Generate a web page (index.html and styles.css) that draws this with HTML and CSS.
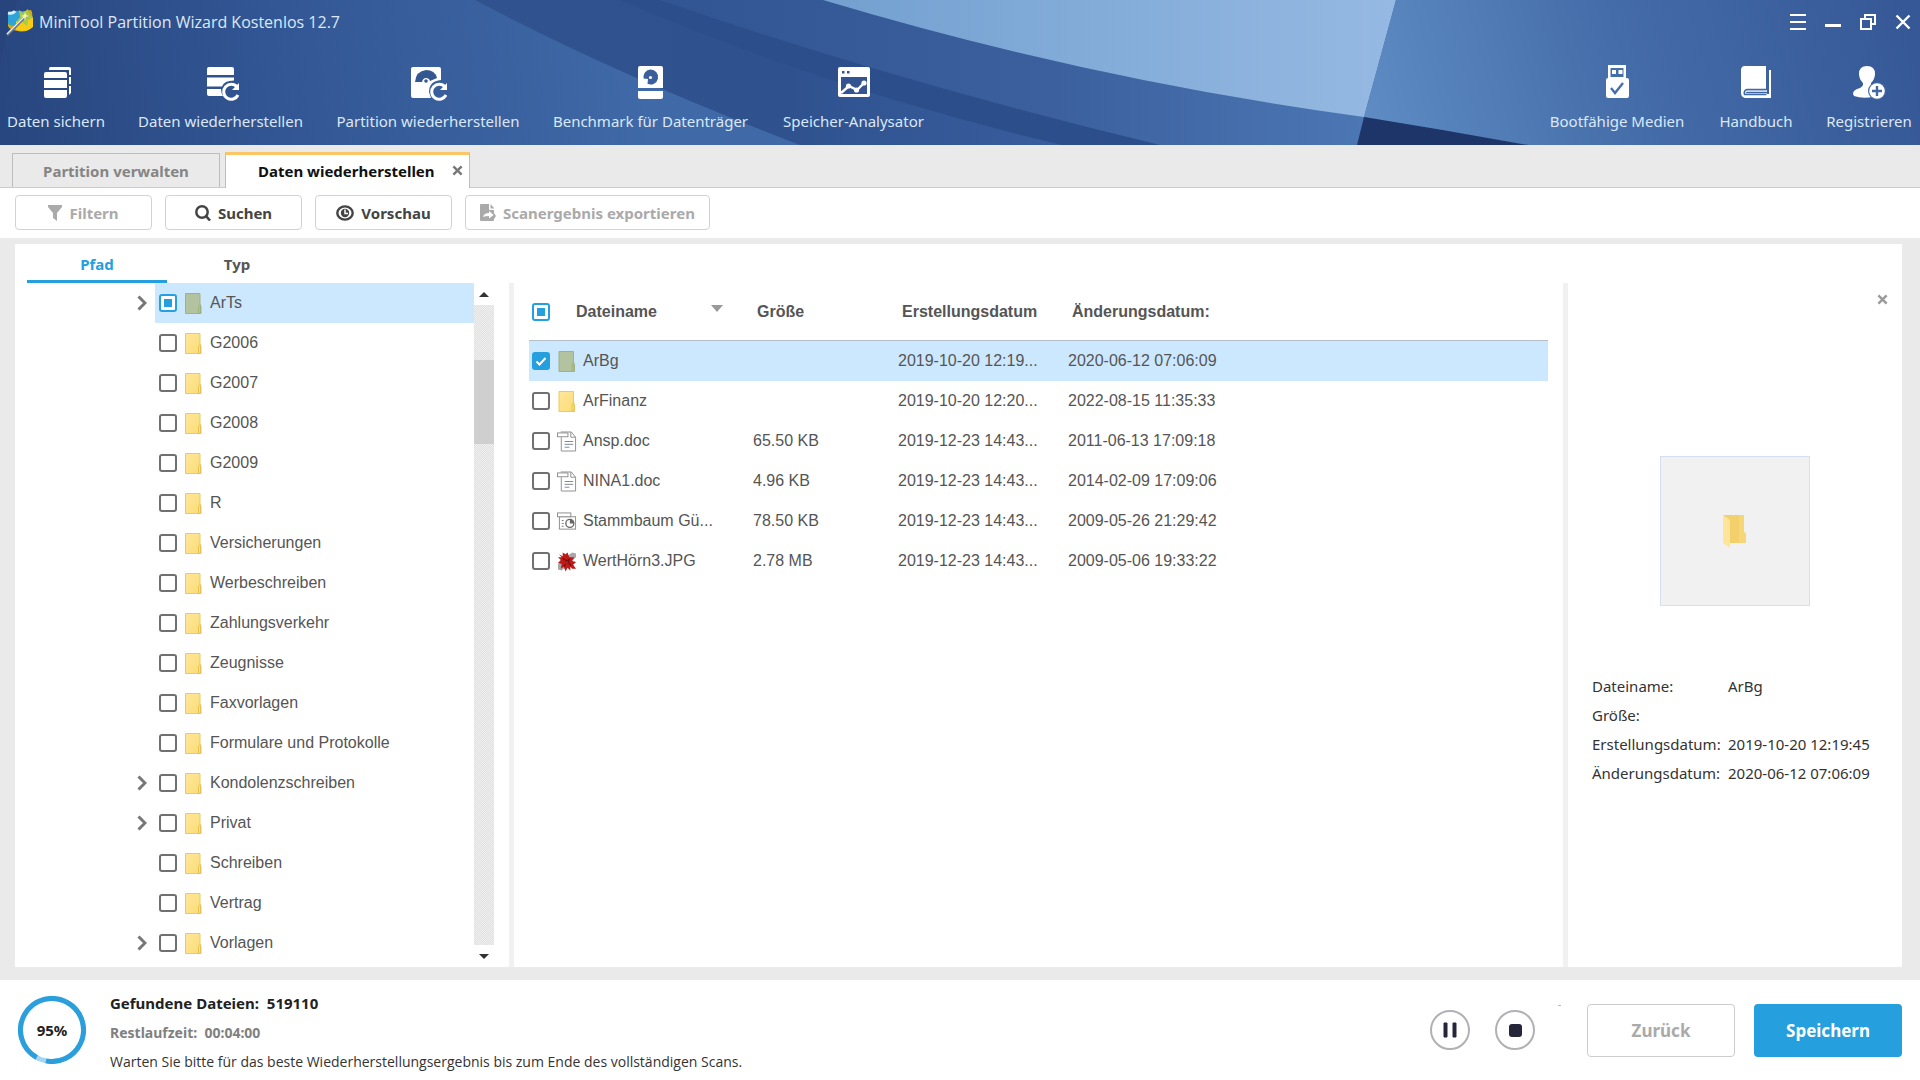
FILE: index.html
```html
<!DOCTYPE html>
<html lang="de">
<head>
<meta charset="utf-8">
<title>MiniTool Partition Wizard Kostenlos 12.7</title>
<link rel="stylesheet" href="styles.css">
</head>
<body>
<svg class="defs" width="0" height="0" aria-hidden="true">
  <defs>
    <linearGradient id="folderFill" x1="0" y1="0" x2="1" y2="1"><stop offset="0" stop-color="#ffe79c"/><stop offset="1" stop-color="#fbdc74"/></linearGradient>
  </defs>
  <symbol id="folder" viewBox="0 0 17 21"><path d="M.5.5h14.500v12l1 1v7H.5z" fill="url(#folderFill)" stroke="#ecca62"/><path d="M13.500 20v-7l2-1.500v9z" fill="#fce28a" stroke="#e3bb4c" stroke-width=".8"/></symbol>
  <symbol id="folder-sel" viewBox="0 0 17 21"><path d="M.5.5h14.500v12l1 1v7H.5z" fill="#b3c3a0" stroke="#9db287"/><path d="M13.500 20v-7l2-1.500v9z" fill="#b0c28f" stroke="#9aae7a" stroke-width=".8"/></symbol>
  <symbol id="doc" viewBox="0 0 21 21"><path d="M4.500 6v14.500h15V6L15 .5H4" fill="#fff" stroke="#8d8d8d"/><path d="M14.500.5V6h5" fill="none" stroke="#8d8d8d"/><rect x=".5" y="1.500" width="11" height="4" fill="#fff" stroke="#8d8d8d"/><path d="M8 10.500h9M8 13.500h9M8 16.500h5" stroke="#7d8591"/></symbol>
  <symbol id="ppt" viewBox="0 0 21 21"><rect x="2.500" y="5.500" width="17" height="13" fill="#fff" stroke="#8d8d8d"/><rect x=".5" y="1.500" width="14" height="4" fill="#fff" stroke="#8d8d8d"/><path d="M5 9.500h2M5 12.500h2M5 15.500h2" stroke="#777"/><circle cx="13.500" cy="12.500" r="4.200" fill="#fff" stroke="#666" stroke-width="1.400"/><path d="M13.500 12.500V8.300a4.200 4.200 0 0 1 4.200 4.200z" fill="#666"/></symbol>
  <symbol id="jpg" viewBox="0 0 21 21"><path d="M12 4l4-3 4 1v4l-6 5zM1 13l6-3 2 6-4 4-4-1z" fill="#a8a8a8"/><path d="M2 3l4 2V1l3 2 2-2 2 5 5 0-2 4 4 1-3 3 3 4-4 0-2-2 0 4-3-3-2 4-2-5-3 2 1-5-4-1 3-3-3-3 4 0z" fill="#bd1a1a"/><path d="M6 7l4 3 3-2-1 4 3 3M9 13l-2 3" fill="none" stroke="#7c0e0e" stroke-width="1.300"/></symbol>
  <symbol id="cross" viewBox="0 0 12 12"><path d="M1.500 1.500l9 9M10.500 1.500l-9 9" stroke="currentColor" stroke-width="2.600"/></symbol>
</svg>

<header class="app-header">
  <svg class="header-art" viewBox="0 0 1920 145" preserveAspectRatio="none" aria-hidden="true">
    <defs>
      <linearGradient id="g1" gradientUnits="userSpaceOnUse" x1="0" y1="130" x2="640" y2="40"><stop offset="0" stop-color="#28467f"/><stop offset=".4" stop-color="#315592"/><stop offset="1" stop-color="#4069a7"/></linearGradient>
      <linearGradient id="g2" x1="0" x2="1"><stop offset="0" stop-color="#305390"/><stop offset=".5" stop-color="#2f528f"/><stop offset="1" stop-color="#3a5e9f"/></linearGradient>
      <linearGradient id="g3" x1="0" x2="1"><stop offset="0" stop-color="#315592"/><stop offset=".45" stop-color="#3c609e"/><stop offset="1" stop-color="#5484c0"/></linearGradient>
      <linearGradient id="g4" x1="0" x2="1"><stop offset="0" stop-color="#73a0d0"/><stop offset="1" stop-color="#95b9e2"/></linearGradient>
      <linearGradient id="g5" gradientUnits="userSpaceOnUse" x1="1360" y1="145" x2="1900" y2="0"><stop offset="0" stop-color="#5f8dc4"/><stop offset=".5" stop-color="#446ca8"/><stop offset="1" stop-color="#365897"/></linearGradient>
    </defs>
    <rect width="1920" height="145" fill="url(#g1)"/>
    <path d="M0 0h18Q5 30 0 65z" fill="#27447d"/>
    <path d="M475 0Q610 72 800 145H1100L640 0z" fill="url(#g2)"/>
    <path d="M660 0Q890 90 1160 145H1540L830 0z" fill="url(#g3)"/>
    <path d="M620 0Q830 90 1062 145H1160Q890 80 660 0z" fill="#2c4e8b"/>
    <path d="M823 0Q1090 80 1364 117L1396 0z" fill="url(#g4)"/>
    <path d="M1396 0H1920V145H1528L1364 117z" fill="url(#g5)"/>
    <path d="M1364 117Q1445 130 1528 145H1357z" fill="#1e3569"/>
  </svg>
  <div class="titlebar">
    <svg class="logo" viewBox="0 0 28 28" aria-hidden="true">
      <path d="M2 6q6-5 11-2l12-2q2 3 1 8v9q-5 6-14 4-9-1-10-5z" fill="#d9a90d"/>
      <path d="M2 5q9-4 15-1v9l-8 5q-6 0-7-3z" fill="#2da3d8"/>
      <path d="M2 5q5 1 7-2" stroke="#d3f2fc" stroke-width="3" fill="none"/>
      <path d="M10 13q8 3 17-4v10q-7 6-17 3z" fill="#f5cc16"/>
      <path d="M13 2l4 3 5-4 1 5 4 3-5 3-1 6-5-4-5-1 3-4z" fill="#a7c94c"/>
      <path d="M1 27L20 8" stroke="#687689" stroke-width="3"/><path d="M1 26L19 8" stroke="#e9f1f5" stroke-width="1.300"/>
      <path d="M19 4l1 3 3 1-3 1-1 4-1-4-3-1 3-1z" fill="#f6f7b0"/>
    </svg>
    <h1 class="app-title">MiniTool Partition Wizard Kostenlos 12.7</h1>
    <div class="window-controls">
      <button class="win-btn" aria-label="Menü"><svg viewBox="0 0 16 16"><path d="M0 1h16M0 8h16M0 15h16" stroke="#fff" stroke-width="2"/></svg></button>
      <button class="win-btn" aria-label="Minimieren"><svg viewBox="0 0 16 16"><path d="M0 11.500h16" stroke="#fff" stroke-width="3"/></svg></button>
      <button class="win-btn" aria-label="Wiederherstellen"><svg viewBox="0 0 16 16"><path d="M5 5V1h10v9h-4M1 5h10v10H1z" fill="none" stroke="#fff" stroke-width="2"/></svg></button>
      <button class="win-btn" aria-label="Schließen"><svg viewBox="0 0 16 16"><path d="M1.500 1.500l13 13M14.500 1.500l-13 13" stroke="#fff" stroke-width="2.400"/></svg></button>
    </div>
  </div>
  <nav class="ribbon" aria-label="Werkzeuge">
    <div class="ribbon-left">
      <button class="ribbon-btn"><svg viewBox="-3 0 38 36"><g fill="#fff"><path d="M10 2h19q2 0 2 2v6h-2V5H9q0-3 1-3zM29 12h2v7h-2zM29 21h2v7l-2 2z"/><path d="M6 7h19q2 0 2 2v4H4V9q0-2 2-2zM4 15h23v8H4zM4 25h23v6q0 2-2 2H6q-2 0-2-2z"/></g></svg>Daten sichern</button>
      <button class="ribbon-btn"><svg viewBox="0 0 38 36"><path d="M7 2h23q2 0 2 2v6H5V4q0-2 2-2zM5 12.500h27v3q-10 0-12 6H5zM5 24h14q0 4 2 7H7q-2 0-2-2z" fill="#fff"/><path d="M35 22a7.500 7.500 0 1 0 1 8" fill="none" stroke="#fff" stroke-width="3"/><path d="M37 18v7h-7z" fill="#fff"/></svg>Daten wiederherstellen</button>
      <button class="ribbon-btn"><svg viewBox="-1 0 38 36"><path d="M3 2h26q2 0 2 2v11q-12 1-12 12l2 6H3q-2 0-2-2V4q0-2 2-2z" fill="#fff"/><path d="M5 17q1-11 11-12 9 0 11 8l-7 3q-1-3-4-3-3 0-4 4z" fill="#34578f"/><circle cx="16" cy="16" r="1.800" fill="#34578f"/><path d="M35 22a7.500 7.500 0 1 0 1 8" fill="none" stroke="#fff" stroke-width="3"/><path d="M37 18v7h-7z" fill="#fff"/></svg>Partition wiederherstellen</button>
      <button class="ribbon-btn"><svg viewBox="0 0 38 36"><path d="M8 1h21q2 0 2 2v20H6V3q0-2 2-2zM6 26h25v6q0 2-2 2H8q-2 0-2-2z" fill="#fff"/><path d="M18.500 4.500a7.500 7.500 0 1 1-3 14.300l.5-4.800-4.500-.5A7.500 7.500 0 0 1 18.500 4.500z" fill="#3a5f9c"/><circle cx="18.500" cy="12.500" r="1.600" fill="#fff"/></svg>Benchmark für Datenträger</button>
      <button class="ribbon-btn"><svg viewBox="-1 0 38 36"><path d="M4 2h28q2 0 2 2v26q0 2-2 2H4q-2 0-2-2V4q0-2 2-2z" fill="#fff"/><path d="M5 12h26v17H5zM6 6h2.500v2.500H6zM11 6h2.500v2.500H11z" fill="#335490"/><path d="M5 28l8-7 8 4 8-8" fill="none" stroke="#fff" stroke-width="2.400"/><circle cx="12.500" cy="21" r="2.600" fill="#fff"/><circle cx="20.500" cy="25" r="2.600" fill="#fff"/><circle cx="28" cy="18" r="2.600" fill="#fff"/></svg>Speicher-Analysator</button>
    </div>
    <div class="ribbon-right">
      <button class="ribbon-btn"><svg viewBox="0 0 38 36"><path d="M10 0h18v13h1q2 0 2 2v16q0 2-2 2H10q-2 0-2-2V15q0-2 2-2z" fill="#fff"/><path d="M12.500 3h13v9h-13z" fill="#4470a9"/><path d="M14 5h4v4h-4zM20.500 5h4v4h-4z" fill="#fff"/><path d="M13 23l4 5 8-10" fill="none" stroke="#4470a9" stroke-width="2.400"/></svg>Bootfähige Medien</button>
      <button class="ribbon-btn"><svg viewBox="0 0 38 36"><path d="M7 1h22v24H10q-4 1-3 4h25V5h2v28H8q-4-1-4-5V4q1-3 3-3z" fill="#fff"/><path d="M30 26H10q-3 1-2 3h22" fill="none" stroke="#fff" stroke-width="1.500"/><path d="M29 24.500H10q-3.500 1-2.500 5h22" fill="none" stroke="#4169a6" stroke-width="1.500"/></svg>Handbuch</button>
      <button class="ribbon-btn"><svg viewBox="0 0 38 36"><path d="M17 1q8 0 8 8 0 5-4 9 0 3 2 3l-2 7 2 4q-11 2-19-1-3-4 3-7 7-2 6-6-4-4-4-9 0-8 8-8z" fill="#fff"/><circle cx="27" cy="26" r="9" fill="#41699f"/><circle cx="27" cy="26" r="7.800" fill="#fff"/><path d="M27 21v10M22 26h10" stroke="#41699f" stroke-width="2.400"/></svg>Registrieren</button>
    </div>
  </nav>
</header>

<nav class="tabs" aria-label="Registerkarten">
  <button class="tab">Partition verwalten</button>
  <div class="tab tab-active">
    <button class="tab-label">Daten wiederherstellen</button>
    <button class="tab-close" aria-label="Registerkarte schließen"><svg width="11" height="11"><use href="#cross"/></svg></button>
  </div>
</nav>

<div class="toolbar">
  <button class="tool-btn" disabled><svg width="14" height="16" viewBox="0 0 14 16"><path d="M0 0h14v2L9 8v8l-4-3V8L0 2z" fill="currentColor"/></svg>Filtern</button>
  <button class="tool-btn"><svg width="16" height="16" viewBox="0 0 16 16"><circle cx="7" cy="7" r="5.700" fill="none" stroke="currentColor" stroke-width="2.500"/><path d="M10.500 10.500l4.500 5" stroke="currentColor" stroke-width="2.600"/></svg>Suchen</button>
  <button class="tool-btn"><svg width="18" height="16" viewBox="0 0 18 16"><ellipse cx="9" cy="8" rx="7.700" ry="6.600" fill="none" stroke="currentColor" stroke-width="2.400"/><circle cx="9" cy="8" r="4.200" fill="currentColor"/><path d="M9 4.500V8.500h3" fill="none" stroke="#fff" stroke-width="1.500"/></svg>Vorschau</button>
  <button class="tool-btn tool-btn-wide" disabled><svg width="16" height="18" viewBox="0 0 16 18"><path d="M1 0h8v5q0 1 1 1h4v3l2 3-2 3v1q0 1-1 1H1q-1 0-1-1V1q0-1 1-1z" fill="currentColor"/><path d="M10.500 0l4 4.500h-4z" fill="currentColor"/><path d="M3 13q1-4 6-4V7l4.500 4L9 14.500V12q-4 0-6 1z" fill="#fff"/></svg>Scanergebnis exportieren</button>
</div>

<main class="workspace">
  <section class="tree-pane">
    <div class="tree-tabs">
      <button class="tree-tab tree-tab-active">Pfad</button>
      <button class="tree-tab">Typ</button>
    </div>
    <div class="tree-body">
      <ul class="tree">
        <li class="tree-row"><button class="expander" aria-label="ArTs aufklappen"><svg viewBox="0 0 10 16"><path d="M1.500 1.500L8 8l-6.500 6.500"/></svg></button><label class="node node-selected"><input type="checkbox" class="check check-partial"><svg class="folder"><use href="#folder-sel"/></svg>ArTs</label></li>
        <li class="tree-row"><label class="node"><input type="checkbox" class="check"><svg class="folder"><use href="#folder"/></svg>G2006</label></li>
        <li class="tree-row"><label class="node"><input type="checkbox" class="check"><svg class="folder"><use href="#folder"/></svg>G2007</label></li>
        <li class="tree-row"><label class="node"><input type="checkbox" class="check"><svg class="folder"><use href="#folder"/></svg>G2008</label></li>
        <li class="tree-row"><label class="node"><input type="checkbox" class="check"><svg class="folder"><use href="#folder"/></svg>G2009</label></li>
        <li class="tree-row"><label class="node"><input type="checkbox" class="check"><svg class="folder"><use href="#folder"/></svg>R</label></li>
        <li class="tree-row"><label class="node"><input type="checkbox" class="check"><svg class="folder"><use href="#folder"/></svg>Versicherungen</label></li>
        <li class="tree-row"><label class="node"><input type="checkbox" class="check"><svg class="folder"><use href="#folder"/></svg>Werbeschreiben</label></li>
        <li class="tree-row"><label class="node"><input type="checkbox" class="check"><svg class="folder"><use href="#folder"/></svg>Zahlungsverkehr</label></li>
        <li class="tree-row"><label class="node"><input type="checkbox" class="check"><svg class="folder"><use href="#folder"/></svg>Zeugnisse</label></li>
        <li class="tree-row"><label class="node"><input type="checkbox" class="check"><svg class="folder"><use href="#folder"/></svg>Faxvorlagen</label></li>
        <li class="tree-row"><label class="node"><input type="checkbox" class="check"><svg class="folder"><use href="#folder"/></svg>Formulare und Protokolle</label></li>
        <li class="tree-row"><button class="expander" aria-label="Kondolenzschreiben aufklappen"><svg viewBox="0 0 10 16"><path d="M1.500 1.500L8 8l-6.500 6.500"/></svg></button><label class="node"><input type="checkbox" class="check"><svg class="folder"><use href="#folder"/></svg>Kondolenzschreiben</label></li>
        <li class="tree-row"><button class="expander" aria-label="Privat aufklappen"><svg viewBox="0 0 10 16"><path d="M1.500 1.500L8 8l-6.500 6.500"/></svg></button><label class="node"><input type="checkbox" class="check"><svg class="folder"><use href="#folder"/></svg>Privat</label></li>
        <li class="tree-row"><label class="node"><input type="checkbox" class="check"><svg class="folder"><use href="#folder"/></svg>Schreiben</label></li>
        <li class="tree-row"><label class="node"><input type="checkbox" class="check"><svg class="folder"><use href="#folder"/></svg>Vertrag</label></li>
        <li class="tree-row"><button class="expander" aria-label="Vorlagen aufklappen"><svg viewBox="0 0 10 16"><path d="M1.500 1.500L8 8l-6.500 6.500"/></svg></button><label class="node"><input type="checkbox" class="check"><svg class="folder"><use href="#folder"/></svg>Vorlagen</label></li>
      </ul>
      <div class="scrollbar">
        <button class="scroll-btn" aria-label="Nach oben"><svg width="10" height="5"><path d="M0 5l5-5 5 5z" fill="#333"/></svg></button>
        <div class="scroll-track"><div class="scroll-thumb"></div></div>
        <button class="scroll-btn" aria-label="Nach unten"><svg width="10" height="5"><path d="M0 0l5 5 5-5z" fill="#333"/></svg></button>
      </div>
    </div>
  </section>

  <section class="list-pane">
    <table class="files">
      <colgroup><col class="col-check"><col class="col-name"><col class="col-size"><col class="col-created"><col></colgroup>
      <thead>
        <tr>
          <th><input type="checkbox" class="check check-partial" aria-label="Alle auswählen"></th>
          <th class="head-name"><div class="name-head">Dateiname<svg class="sort-arrow" width="12" height="13"><path d="M0 0h12L6 7z" fill="#999"/></svg></div></th>
          <th>Größe</th>
          <th>Erstellungsdatum</th>
          <th>Änderungsdatum:</th>
        </tr>
      </thead>
      <tbody>
        <tr class="selected"><td><input type="checkbox" class="check" id="f1" checked></td><td><label class="file" for="f1"><svg class="file-icon"><use href="#folder-sel"/></svg>ArBg</label></td><td></td><td>2019-10-20 12:19...</td><td>2020-06-12 07:06:09</td></tr>
        <tr><td><input type="checkbox" class="check" id="f2"></td><td><label class="file" for="f2"><svg class="file-icon"><use href="#folder"/></svg>ArFinanz</label></td><td></td><td>2019-10-20 12:20...</td><td>2022-08-15 11:35:33</td></tr>
        <tr><td><input type="checkbox" class="check" id="f3"></td><td><label class="file" for="f3"><svg class="file-icon"><use href="#doc"/></svg>Ansp.doc</label></td><td>65.50 KB</td><td>2019-12-23 14:43...</td><td>2011-06-13 17:09:18</td></tr>
        <tr><td><input type="checkbox" class="check" id="f4"></td><td><label class="file" for="f4"><svg class="file-icon"><use href="#doc"/></svg>NINA1.doc</label></td><td>4.96 KB</td><td>2019-12-23 14:43...</td><td>2014-02-09 17:09:06</td></tr>
        <tr><td><input type="checkbox" class="check" id="f5"></td><td><label class="file" for="f5"><svg class="file-icon"><use href="#ppt"/></svg>Stammbaum Gü...</label></td><td>78.50 KB</td><td>2019-12-23 14:43...</td><td>2009-05-26 21:29:42</td></tr>
        <tr><td><input type="checkbox" class="check" id="f6"></td><td><label class="file" for="f6"><svg class="file-icon"><use href="#jpg"/></svg>WertHörn3.JPG</label></td><td>2.78 MB</td><td>2019-12-23 14:43...</td><td>2009-05-06 19:33:22</td></tr>
      </tbody>
    </table>
  </section>

  <aside class="preview-pane">
    <button class="preview-close" aria-label="Vorschau schließen"><svg width="11" height="11"><use href="#cross"/></svg></button>
    <div class="thumb">
      <svg width="26" height="34" viewBox="0 0 26 34" aria-hidden="true">
        <path d="M1 1h21v17l2 2v9H8z" fill="#f3d06c"/><path d="M17 1h5v17l2 2v9h-7z" fill="#f6d778"/><path d="M1 1l7 5v28l-7-5z" fill="#ffe59a"/>
      </svg>
    </div>
    <dl class="details">
      <dt>Dateiname:</dt><dd>ArBg</dd>
      <dt>Größe:</dt><dd></dd>
      <dt>Erstellungsdatum:</dt><dd>2019-10-20 12:19:45</dd>
      <dt>Änderungsdatum:</dt><dd>2020-06-12 07:06:09</dd>
    </dl>
  </aside>
</main>

<footer class="statusbar">
  <div class="progress">
    <svg viewBox="0 0 68 68" aria-hidden="true"><circle cx="34" cy="34" r="31.500" fill="none" stroke="#a6d5f0" stroke-width="5"/><circle cx="34" cy="34" r="31.500" fill="none" stroke="#2b9fdc" stroke-width="5" pathLength="100" stroke-dasharray="95 5" transform="rotate(119 34 34)"/></svg>
    <span class="progress-value">95%</span>
  </div>
  <div class="status-text">
    <p class="found">Gefundene Dateien:&nbsp; 519110</p>
    <p class="remaining">Restlaufzeit:&nbsp; 00:04:00</p>
    <p class="hint">Warten Sie bitte für das beste Wiederherstellungsergebnis bis zum Ende des vollständigen Scans.</p>
  </div>
  <div class="round-buttons">
    <button class="round-btn" aria-label="Pause"><svg width="14" height="16"><path d="M1 1h3v14H1zM10 1h3v14h-3z" fill="#26263a" stroke="#26263a" stroke-linejoin="round"/></svg></button>
    <button class="round-btn" aria-label="Stopp"><svg width="13" height="13"><rect width="13" height="13" rx="3" fill="#26263a"/></svg></button>
  </div>
  <span class="mark"></span>
  <button class="action-btn action-back" disabled>Zurück</button>
  <button class="action-btn action-save">Speichern</button>
</footer>
</body>
</html>
```
FILE: styles.css
```css
* { box-sizing: border-box; }

html { background: #fff; }

body {
  margin: 0;
  min-height: 100vh;
  display: flex;
  flex-direction: column;
  font-family: "Noto Sans", "Open Sans", sans-serif;
  font-size: 15px;
  color: #333;
}

button {
  font: inherit;
  color: inherit;
  background: none;
  border: 0;
  padding: 0;
}

svg { display: block; flex: none; }

.defs { position: absolute; }

/* Header */

.app-header {
  position: relative;
  height: 145px;
  color: #dbe8f8;
  background: #31548f;
}

.header-art {
  position: absolute;
  inset: 0;
  width: 100%;
  height: 100%;
}

.titlebar {
  position: relative;
  display: flex;
  align-items: center;
  height: 44px;
  padding: 0 9px 0 6px;
}

.logo { width: 28px; height: 28px; }

.app-title {
  flex: 1;
  margin: 0 0 0 5px;
  font-family: "Open Sans", "Noto Sans", sans-serif;
  font-size: 16px;
  font-weight: 400;
}

.window-controls { display: flex; gap: 19px; }

.win-btn svg { width: 16px; height: 16px; }

.ribbon {
  position: relative;
  display: flex;
  justify-content: space-between;
  padding: 21px 7px 0;
}

.ribbon-left,
.ribbon-right {
  display: grid;
  gap: 32px;
}

.ribbon-left { grid-template-columns: 98px 167px 184px 197px 145px; }
.ribbon-right { grid-template-columns: 140px 74px 88px; }

.ribbon-btn {
  display: flex;
  flex-direction: column;
  align-items: center;
  gap: 10px;
  line-height: 20px;
  white-space: nowrap;
}

.ribbon-btn svg { width: 38px; height: 36px; }

/* Tabs */

.tabs {
  display: flex;
  align-items: flex-end;
  gap: 5px;
  height: 43px;
  padding-left: 12px;
  background: #eaeaea;
  border-bottom: 1px solid #ccc;
  font-weight: 700;
}

.tab {
  height: 34px;
  width: 208px;
  border: 1px solid #bdbdbd;
  border-bottom: 0;
  color: #858585;
}

.tab-active {
  display: flex;
  align-items: center;
  justify-content: space-between;
  width: 245px;
  height: 36px;
  margin-bottom: -1px;
  padding: 0 6px 2px 32px;
  background: #fff;
  border-top: 3px solid #fbc766;
  color: #111;
}

.tab-close { color: #777; }

/* Toolbar */

.toolbar {
  display: flex;
  gap: 13px;
  padding: 7px 15px 8px;
}

.tool-btn {
  display: flex;
  align-items: center;
  justify-content: center;
  gap: 7px;
  width: 137px;
  height: 35px;
  border: 1px solid #d2d2d2;
  border-radius: 4px;
  font-weight: 700;
  color: #444;
  white-space: nowrap;
}

.tool-btn:disabled { color: #aaa; }

.tool-btn-wide { width: 245px; }

/* Workspace */

.workspace {
  flex: 1;
  display: grid;
  grid-template-columns: 494px 1fr 334px;
  border: solid #eaeaea;
  border-width: 6px 18px 13px 15px;
}

.tree-pane { display: flex; flex-direction: column; }

.tree-tabs {
  display: flex;
  height: 39px;
  padding-left: 12px;
}

.tree-tab {
  width: 140px;
  padding-top: 4px;
  font-weight: 700;
  color: #555;
  border-bottom: 3px solid transparent;
}

.tree-tab-active {
  color: #259fdd;
  border-bottom-color: #259fdd;
}

.tree-body {
  flex: 1;
  display: flex;
  padding-right: 15px;
}

.tree {
  flex: 1;
  margin: 0;
  padding: 0;
  list-style: none;
  font-family: "Liberation Sans", Arial, sans-serif;
  font-size: 16px;
  color: #555;
}

.tree-row {
  display: flex;
  justify-content: flex-end;
  align-items: center;
  height: 40px;
}

.expander { margin-right: 8px; }

.expander svg {
  width: 10px;
  height: 16px;
  fill: none;
  stroke: #777;
  stroke-width: 3;
}

.node {
  display: flex;
  align-items: center;
  gap: 8px;
  width: 319px;
  height: 40px;
  padding-left: 4px;
}

.node-selected { background: #cce8ff; }

.folder { width: 17px; height: 21px; }

.check {
  appearance: none;
  flex: none;
  display: block;
  width: 18px;
  height: 18px;
  margin: 0;
  border: 2px solid #707070;
  border-radius: 3px;
  background: #fff;
}

.check-partial {
  border-color: #259fdd;
  background: linear-gradient(#259fdd, #259fdd) center / 8px 8px no-repeat #fff;
}

.check:checked {
  border-color: #259fdd;
  background: #259fdd url("data:image/svg+xml,%3Csvg xmlns='http://www.w3.org/2000/svg' viewBox='0 0 14 14'%3E%3Cpath d='M2.500 7.500l3 3L11.500 4' fill='none' stroke='white' stroke-width='2'/%3E%3C/svg%3E") center / 14px 14px no-repeat;
}

.scrollbar {
  display: flex;
  flex-direction: column;
  width: 20px;
}

.scroll-btn {
  display: flex;
  align-items: center;
  justify-content: center;
  height: 22px;
}

.scroll-track {
  flex: 1;
  padding-top: 55px;
  background: repeating-conic-gradient(#f0f0f0 0 25%, #e0e0e0 0 50%) 0 0 / 2px 2px;
}

.scroll-thumb { height: 84px; background: #cfcfcf; }

.list-pane {
  margin-top: 39px;
  padding: 0 15px;
  border-left: 5px solid #f1f1f4;
  border-right: 5px solid #f1f1f4;
}

.files {
  width: 100%;
  table-layout: fixed;
  border-collapse: separate;
  border-spacing: 0;
  font-family: "Liberation Sans", Arial, sans-serif;
  font-size: 16px;
  color: #555;
}

.col-check { width: 28px; }
.col-name { width: 188px; }
.col-size { width: 145px; }
.col-created { width: 170px; }

.files th,
.files td {
  height: 40px;
  padding: 0 0 0 8px;
  text-align: left;
  white-space: nowrap;
}

.files th {
  height: 58px;
  padding-left: 12px;
  border-bottom: 1px solid #b3bec8;
}

.files th:first-child,
.files td:first-child { padding-left: 3px; }

.files td:nth-child(2) { padding-left: 0; }

.files .head-name { padding: 0 22px 0 19px; }

.name-head {
  display: flex;
  align-items: center;
  justify-content: space-between;
}

.selected { background: #cce8ff; }

.file {
  display: flex;
  align-items: center;
  gap: 6px;
}

.file-icon { width: 20px; height: 21px; }

/* Preview */

.preview-pane {
  display: flex;
  flex-direction: column;
  margin-top: 39px;
}

.preview-close {
  align-self: flex-end;
  margin: 11px 14px 0 0;
  color: #999;
}

.thumb {
  display: flex;
  align-items: center;
  justify-content: center;
  align-self: center;
  width: 150px;
  height: 150px;
  margin-top: 151px;
  background: #f1f1f1;
  border: 1px solid #d5dfee;
}

.details {
  display: grid;
  grid-template-columns: 136px 1fr;
  grid-auto-rows: 29px;
  margin: 66px 0 0 24px;
  line-height: 29px;
}

.details dd { margin: 0; white-space: nowrap; }

/* Footer */

.statusbar {
  display: flex;
  align-items: center;
  height: 100px;
  padding: 0 18px;
}

.progress {
  display: grid;
  place-items: center;
}

.progress > * { grid-area: 1 / 1; }

.progress svg { width: 68px; height: 68px; }

.progress-value { font-weight: 700; color: #222; }

.status-text { flex: 1; margin-left: 24px; padding-top: 3px; }

.status-text p { margin: 0; }

.found { line-height: 30px; font-weight: 700; color: #222; }

.remaining { line-height: 30px; font-size: 14px; font-weight: 700; color: #808080; }

.hint {
  line-height: 28px;
  font-family: "Open Sans", "Noto Sans", sans-serif;
  font-size: 14px;
}

.round-buttons {
  display: flex;
  gap: 25px;
}

.mark {
  align-self: flex-start;
  width: 3px;
  height: 1px;
  margin: 25px 26px 0 23px;
  background: #b5b5b5;
}

.round-btn {
  display: flex;
  align-items: center;
  justify-content: center;
  width: 40px;
  height: 40px;
  border: 2px solid #b0b0b5;
  border-radius: 50%;
}

.action-btn {
  width: 148px;
  height: 53px;
  border-radius: 4px;
  font-size: 17px;
  font-weight: 700;
}

.action-back {
  margin-right: 19px;
  border: 1px solid #ccc;
  color: #aaa;
}

.action-save { background: #259fdd; color: #fff; }
```
